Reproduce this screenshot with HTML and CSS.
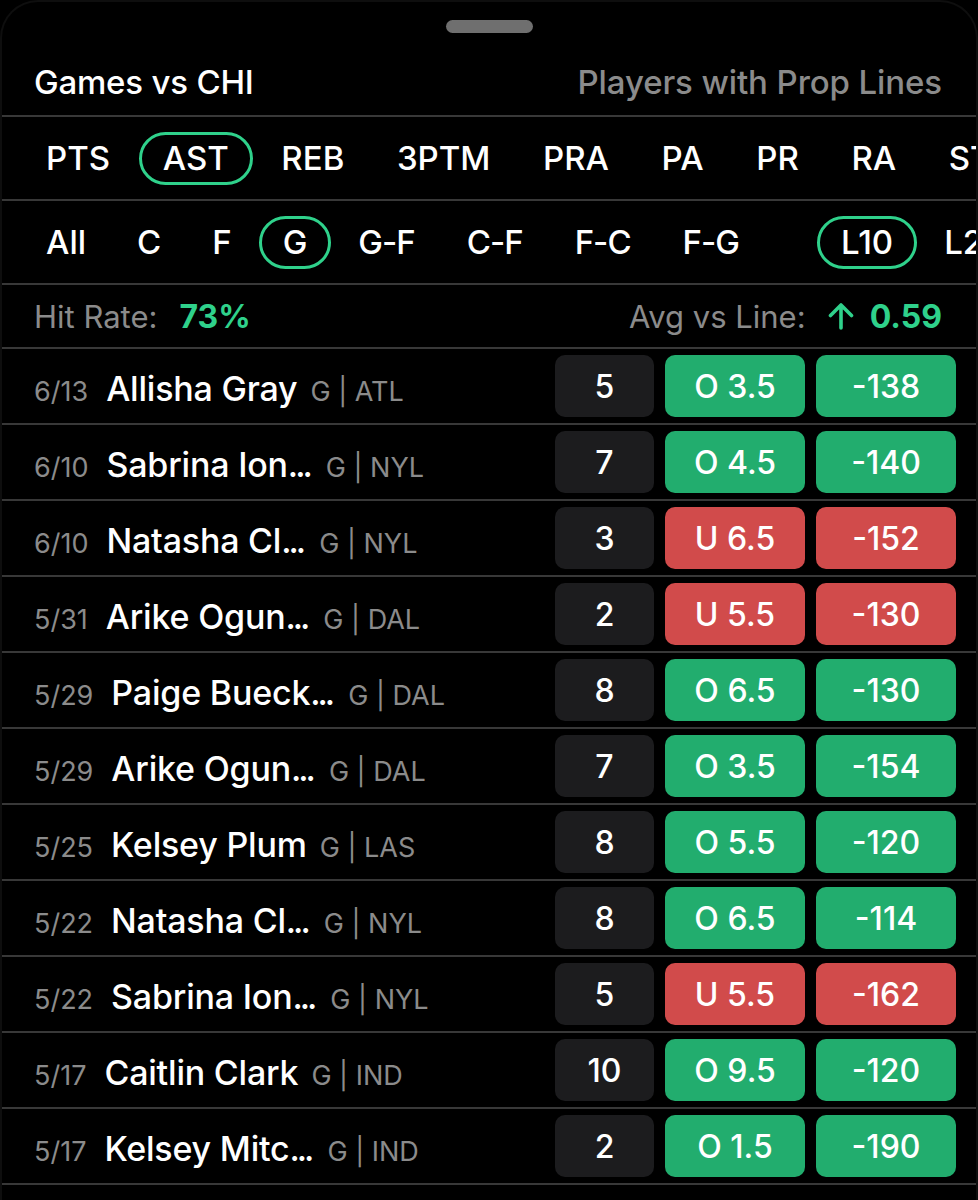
FILE: index.html
```html
<!DOCTYPE html>
<html>
<head>
<meta charset="utf-8">
<link rel="stylesheet" href="styles.css">
</head>
<body>
<div class="sheet">
  <div class="handle"></div>
  <div class="header section">
    <div class="title">Games vs CHI</div>
    <div class="subtitle">Players with Prop Lines</div>
  </div>
  <div class="tabs section">
    <span class="tab">PTS</span>
    <span class="tab active">AST</span>
    <span class="tab">REB</span>
    <span class="tab">3PTM</span>
    <span class="tab">PRA</span>
    <span class="tab">PA</span>
    <span class="tab">PR</span>
    <span class="tab">RA</span>
    <span class="tab">STL</span>
    <span class="tab">BLK</span>
  </div>
  <div class="tabs positions section">
    <span class="tab">All</span>
    <span class="tab">C</span>
    <span class="tab">F</span>
    <span class="tab active">G</span>
    <span class="tab hy">G-F</span>
    <span class="tab hy">C-F</span>
    <span class="tab hy">F-C</span>
    <span class="tab hy">F-G</span>
    <span class="tab active range">L10</span>
    <span class="tab">L20</span>
  </div>
  <div class="stats section">
    <div class="stat"><span class="label">Hit Rate:</span><span class="value">73%</span></div>
    <div class="stat"><span class="label">Avg vs Line:</span>
      <svg class="arrow" viewBox="0 0 26 28" width="26" height="28"><path d="M13 26V3M2.5 13.5L13 3l10.5 10.5" fill="none" stroke="#2fd18b" stroke-width="3.6" stroke-linecap="round" stroke-linejoin="round"/></svg>
      <span class="value">0.59</span></div>
  </div>
  <div class="row section"><div class="player"><span class="date">6/13</span><span class="name">Allisha Gray</span><span class="team">G | ATL</span></div><div class="cells"><span class="cell num">5</span><span class="cell line over">O 3.5</span><span class="cell odds over">-138</span></div></div>
  <div class="row section"><div class="player"><span class="date">6/10</span><span class="name">Sabrina Ion<span class="ell">...</span></span><span class="team">G | NYL</span></div><div class="cells"><span class="cell num">7</span><span class="cell line over">O 4.5</span><span class="cell odds over">-140</span></div></div>
  <div class="row section"><div class="player"><span class="date">6/10</span><span class="name">Natasha Cl<span class="ell">...</span></span><span class="team">G | NYL</span></div><div class="cells"><span class="cell num">3</span><span class="cell line under">U 6.5</span><span class="cell odds under">-152</span></div></div>
  <div class="row section"><div class="player"><span class="date">5/31</span><span class="name">Arike Ogun<span class="ell">...</span></span><span class="team">G | DAL</span></div><div class="cells"><span class="cell num">2</span><span class="cell line under">U 5.5</span><span class="cell odds under">-130</span></div></div>
  <div class="row section"><div class="player"><span class="date">5/29</span><span class="name">Paige Bueck<span class="ell">...</span></span><span class="team">G | DAL</span></div><div class="cells"><span class="cell num">8</span><span class="cell line over">O 6.5</span><span class="cell odds over">-130</span></div></div>
  <div class="row section"><div class="player"><span class="date">5/29</span><span class="name">Arike Ogun<span class="ell">...</span></span><span class="team">G | DAL</span></div><div class="cells"><span class="cell num">7</span><span class="cell line over">O 3.5</span><span class="cell odds over">-154</span></div></div>
  <div class="row section"><div class="player"><span class="date">5/25</span><span class="name">Kelsey Plum</span><span class="team">G | LAS</span></div><div class="cells"><span class="cell num">8</span><span class="cell line over">O 5.5</span><span class="cell odds over">-120</span></div></div>
  <div class="row section"><div class="player"><span class="date">5/22</span><span class="name">Natasha Cl<span class="ell">...</span></span><span class="team">G | NYL</span></div><div class="cells"><span class="cell num">8</span><span class="cell line over">O 6.5</span><span class="cell odds over">-114</span></div></div>
  <div class="row section"><div class="player"><span class="date">5/22</span><span class="name">Sabrina Ion<span class="ell">...</span></span><span class="team">G | NYL</span></div><div class="cells"><span class="cell num">5</span><span class="cell line under">U 5.5</span><span class="cell odds under">-162</span></div></div>
  <div class="row section"><div class="player"><span class="date">5/17</span><span class="name">Caitlin Clark</span><span class="team">G | IND</span></div><div class="cells"><span class="cell num">10</span><span class="cell line over">O 9.5</span><span class="cell odds over">-120</span></div></div>
  <div class="row section"><div class="player"><span class="date">5/17</span><span class="name">Kelsey Mitc<span class="ell">...</span></span><span class="team">G | IND</span></div><div class="cells"><span class="cell num">2</span><span class="cell line over">O 1.5</span><span class="cell odds over">-190</span></div></div>
</div>
</body>
</html>
```
FILE: styles.css
```css
* { box-sizing: border-box; }
html, body {
  margin: 0;
  background: #000;
  font-family: Inter, "Noto Sans", "Liberation Sans", sans-serif;
  color: #fff;
}
.sheet {
  width: 978px;
  height: 1200px;
  overflow: hidden;
  background: #000;
  border: 2px solid #0e0e0e;
  border-bottom: none;
  border-radius: 38px 38px 0 0;
}
.handle {
  width: 87px;
  height: 13px;
  margin: 18px auto 0;
  border-radius: 7px;
  background: #6f6f6f;
}
.section {
  border-bottom: 2px solid #383838;
}
.header {
  height: 84px;
  display: flex;
  align-items: center;
  justify-content: space-between;
  padding: 16px 34px 0 32px;
}
.title {
  font-size: 33px;
  font-weight: 500;
  letter-spacing: -0.2px;
}
.subtitle {
  font-size: 33px;
  font-weight: 500;
  color: #8b8b8b;
  letter-spacing: -0.1px;
}
.tabs {
  height: 84px;
  display: flex;
  align-items: center;
  gap: 4.6px;
  padding-left: 20px;
  white-space: nowrap;
  overflow: hidden;
}
.tabs.positions {
  gap: 3px;
}
.tab {
  font-size: 33px;
  font-weight: 500;
  padding: 0 21px;
  height: 53px;
  line-height: 47px;
  border: 3px solid transparent;
  border-radius: 27px;
  flex: none;
}
.tab.hy {
  letter-spacing: -1px;
  padding-right: 22px;
}
.tab.active {
  border-color: #2fd18b;
}
.tab.range {
  margin-left: 50px;
}
.stats {
  height: 64px;
  display: flex;
  align-items: center;
  justify-content: space-between;
  padding: 0 34px 0 32px;
}
.stat {
  display: flex;
  align-items: center;
}
.label {
  font-size: 31px;
  color: #8b8b8b;
  margin-right: 22px;
}
.arrow {
  margin-right: 16px;
}
.value {
  font-size: 32px;
  font-weight: 700;
  color: #2fd18b;
}
.row {
  height: 76px;
  display: flex;
  align-items: center;
  justify-content: space-between;
  padding: 0 20px 0 32px;
}
.player {
  display: flex;
  align-items: baseline;
  white-space: nowrap;
  padding-top: 4px;
}
.date {
  font-size: 27px;
  color: #8b8b8b;
  margin-right: 18px;
}
.name {
  font-size: 34px;
  font-weight: 500;
  letter-spacing: -0.2px;
  margin-right: 13px;
}
.ell {
  letter-spacing: -3px;
  margin-right: 3px;
}
.team {
  font-size: 27px;
  color: #8b8b8b;
}
.cells {
  display: flex;
  gap: 11px;
}
.cell {
  height: 62px;
  border-radius: 10px;
  display: flex;
  align-items: center;
  justify-content: center;
  font-size: 32px;
  font-weight: 500;
}
.num {
  width: 99px;
  background: #1c1c1e;
}
.line, .odds {
  width: 140px;
}
.over { background: #22ad6e; }
.under { background: #d14b4b; }
```
